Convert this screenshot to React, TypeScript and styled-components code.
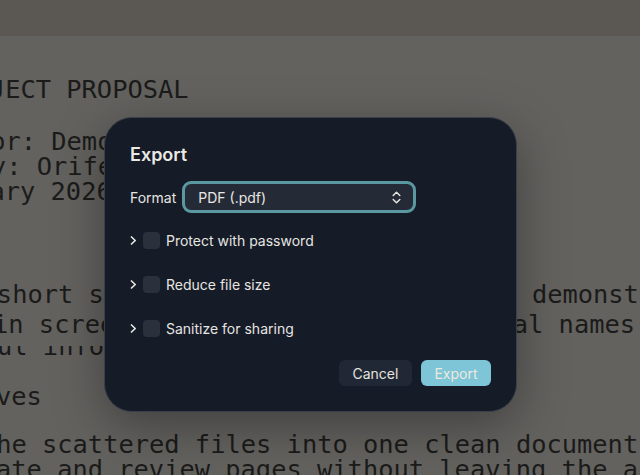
import styled, { createGlobalStyle } from 'styled-components';

const GlobalStyle = createGlobalStyle`
  html, body {
    margin: 0;
    padding: 0;
  }
  body {
    width: 640px;
    height: 475px;
    overflow: hidden;
    background: #63625f;
    font-family: Inter, "Noto Sans", sans-serif;
  }
`;

const Screen = styled.div`
  position: relative;
  width: 640px;
  height: 475px;
  display: flex;
  flex-direction: column;
  overflow: hidden;
  background: #63625f;
`;

const TopBar = styled.div`
  height: 36px;
  flex-shrink: 0;
  background: #5b5854;
`;

const Doc = styled.div`
  flex: 1;
  display: flex;
  flex-direction: column;
  padding-top: 41px;
  font-family: "DejaVu Sans Mono", monospace;
  font-size: 25.4px;
  line-height: 25px;
  color: #1b1b1a;
  white-space: pre;
`;

const DocLine = styled.div<{ $shift: number; $gap?: number }>`
  height: 25px;
  flex-shrink: 0;
  margin-left: ${p => p.$shift}px;
  margin-top: ${p => p.$gap ?? 0}px;
`;

// third paragraph line only shows its lower half in the reference
const ClippedLine = styled.div<{ $shift: number; $gap?: number }>`
  height: 13px;
  flex-shrink: 0;
  overflow: hidden;
  display: flex;
  align-items: flex-end;
  margin-left: ${p => p.$shift}px;
  margin-top: ${p => p.$gap ?? 0}px;

  span {
    display: block;
    height: 25px;
    flex-shrink: 0;
  }
`;

const Overlay = styled.div`
  position: absolute;
  inset: 0;
  display: flex;
  align-items: flex-start;
  padding: 117px 0 0 104px;
  box-sizing: border-box;
`;

const Dialog = styled.div`
  width: 413px;
  height: 295px;
  box-sizing: border-box;
  background: #151b27;
  border: 1px solid #3a3f49;
  border-radius: 28px;
  box-shadow: 0 14px 50px rgba(0, 0, 0, 0.35);
  padding: 26px 25px 25px 25px;
  display: flex;
  flex-direction: column;
  color: #e6e5e1;
  font-family: Inter, "Noto Sans", sans-serif;
`;

const Title = styled.h2`
  margin: 0;
  font-size: 18px;
  line-height: 22px;
  font-weight: 600;
  color: #ebe9e4;
`;

const FormatRow = styled.div`
  display: flex;
  align-items: center;
  gap: 6px;
  margin-top: 15px;
  font-size: 14px;
`;

const Select = styled.div`
  width: 234px;
  height: 32px;
  box-sizing: border-box;
  border: 3px solid #5a99a1;
  border-radius: 9px;
  background: #252b36;
  padding: 0 12px 0 13px;
  display: flex;
  align-items: center;
  justify-content: space-between;
  font-size: 14px;
  color: #e8e7e3;
`;

const Options = styled.div`
  display: flex;
  flex-direction: column;
  gap: 24px;
  margin-top: 17px;
`;

const OptionRow = styled.div`
  height: 20px;
  display: flex;
  align-items: center;
  gap: 6px;
  font-size: 14px;
`;

const Checkbox = styled.span`
  width: 17px;
  height: 17px;
  border-radius: 4px;
  background: #2a303c;
`;

const Footer = styled.div`
  margin-top: auto;
  display: flex;
  justify-content: flex-end;
  gap: 9px;
`;

const Button = styled.button<{ $primary?: boolean }>`
  height: 26px;
  padding: 0 13.5px;
  border: none;
  border-radius: 6px;
  font-family: Inter, "Noto Sans", sans-serif;
  font-size: 14px;
  background: ${p => (p.$primary ? '#7dc5d7' : '#212835')};
  color: ${p => (p.$primary ? '#ece9df' : '#e4e3df')};
`;

const Chevron = () => (
  <svg width="7" height="9" viewBox="0 0 7 9" fill="none">
    <path d="M1.5 1 L5.2 4.5 L1.5 8" stroke="#e6e5e1" strokeWidth="1.7" strokeLinecap="round" strokeLinejoin="round" />
  </svg>
);

const UpDown = () => (
  <svg width="9" height="13" viewBox="0 0 9 13" fill="none">
    <path d="M1.2 4.5 L4.5 1.2 L7.8 4.5 M1.2 8.5 L4.5 11.8 L7.8 8.5" stroke="#e6e5e1" strokeWidth="1.5" strokeLinecap="round" strokeLinejoin="round" />
  </svg>
);

const options = ['Protect with password', 'Reduce file size', 'Sanitize for sharing'];

export default function App() {
  return (
    <Screen>
      <GlobalStyle />
      <TopBar />
      <Doc>
        <DocLine $shift={-56}>PROJECT PROPOSAL</DocLine>
        <DocLine $shift={-71} $gap={27}>Author: Demo User</DocLine>
        <DocLine $shift={-162}>Prepared by: Orifeld Studio</DocLine>
        <DocLine $shift={-87}>February 2026</DocLine>
        <DocLine $shift={-156} $gap={78}>This is a short screenshot sample written to demonstrate</DocLine>
        <DocLine $shift={-114} $gap={5}>layout in screenshots and it uses fictional names</DocLine>
        <ClippedLine $shift={-110} $gap={9}><span>no useful information.</span></ClippedLine>
        <DocLine $shift={-111} $gap={25}>Objectives</DocLine>
        <DocLine $shift={-172} $gap={23}>- Combine the scattered files into one clean document</DocLine>
        <DocLine $shift={-111}>- Annotate and review pages without leaving the app</DocLine>
      </Doc>
      <Overlay>
        <Dialog>
          <Title>Export</Title>
          <FormatRow>
            <span>Format</span>
            <Select>
              <span>PDF (.pdf)</span>
              <UpDown />
            </Select>
          </FormatRow>
          <Options>
            {options.map(label => (
              <OptionRow key={label}>
                <Chevron />
                <Checkbox />
                <span>{label}</span>
              </OptionRow>
            ))}
          </Options>
          <Footer>
            <Button>Cancel</Button>
            <Button $primary>Export</Button>
          </Footer>
        </Dialog>
      </Overlay>
    </Screen>
  );
}
